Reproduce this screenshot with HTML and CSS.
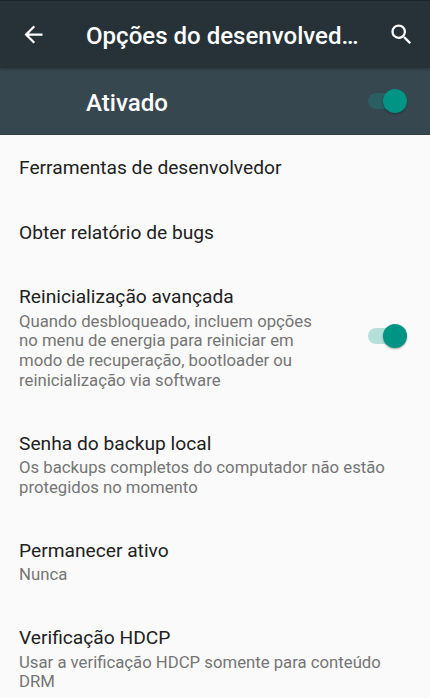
FILE: index.html
```html
<!DOCTYPE html>
<html lang="pt-BR">
<head>
<meta charset="utf-8">
<title>Opções do desenvolvedor</title>
<link rel="stylesheet" href="styles.css">
</head>
<body>
<header class="bar">
  <svg class="back" viewBox="0 0 24 24"><path d="M20 11H7.83l5.59-5.59L12 4l-8 8 8 8 1.41-1.41L7.83 13H20z"/></svg>
  <h1 class="title">Opções do desenvolved…</h1>
  <svg class="search" viewBox="0 0 24 24"><path d="M15.5 14h-.79l-.28-.27A6.47 6.47 0 0 0 16 9.5 6.5 6.5 0 1 0 9.5 16c1.61 0 3.09-.59 4.23-1.57l.27.28v.79l5 4.99L20.49 19zm-6 0a4.5 4.5 0 1 1 0-9 4.5 4.5 0 0 1 0 9z"/></svg>
</header>
<section class="master">
  <span class="state">Ativado</span>
  <span class="switch dark"></span>
</section>
<main class="list">
  <div class="item"><h2>Ferramentas de desenvolvedor</h2></div>
  <div class="item"><h2>Obter relatório de bugs</h2></div>
  <div class="item split">
    <div>
      <h2>Reinicialização avançada</h2>
      <p>Quando desbloqueado, incluem opções<br>no menu de energia para reiniciar em<br>modo de recuperação, bootloader ou<br>reinicialização via software</p>
    </div>
    <span class="switch"></span>
  </div>
  <div class="item"><h2>Senha do backup local</h2><p>Os backups completos do computador não estão<br>protegidos no momento</p></div>
  <div class="item"><h2>Permanecer ativo</h2><p>Nunca</p></div>
  <div class="item"><h2>Verificação HDCP</h2><p>Usar a verificação HDCP somente para conteúdo<br>DRM</p></div>
</main>
</body>
</html>
```
FILE: styles.css
```css
* { box-sizing: border-box; }
body { margin: 0; height: 698px; overflow: hidden; background: #fafafa; font-family: Roboto, "Liberation Sans", sans-serif; }
h1, h2, p { margin: 0; white-space: nowrap; }
.bar { position: relative; z-index: 1; display: flex; align-items: center; height: 68px; padding: 0 15px 0 20px; border-top: 1px solid #1a2328; background: #263238; box-shadow: 0 1px 3px rgba(0,0,0,.3); color: #fff; }
.bar svg { width: 27px; height: 27px; fill: #fff; flex: none; }
.title { flex: 1; margin-left: 39px; padding-top: 3px; font-size: 24.05px; font-weight: 500; line-height: 32px; }
.master { display: flex; align-items: center; justify-content: space-between; height: 67px; padding: 0 23px 0 86px; border-bottom: 1px solid #2f3d45; background: #37474f; color: #fff; }
.state { padding-top: 4px; font-size: 24.1px; font-weight: 500; line-height: 32px; }
.switch { display: flex; justify-content: flex-end; align-items: center; flex: none; width: 39px; height: 16px; border-radius: 8px; background: #b5dfda; }
.switch::after { content: ""; width: 24px; height: 24px; border-radius: 50%; background: #009485; box-shadow: 0 1px 2px rgba(0,0,0,.35); }
.switch.dark { background: #2b5e60; }
.list { padding-top: 1px; }
.item { padding: 20px 23px 20px 19px; }
.split { display: flex; justify-content: space-between; align-items: center; }
.split .switch { margin-bottom: 4px; }
h2 { font-size: 19.2px; font-weight: 400; line-height: 24.5px; color: #212121; }
p { padding: 2.2px 0 1px; font-size: 16.73px; line-height: 19.7px; color: #757575; }
```
